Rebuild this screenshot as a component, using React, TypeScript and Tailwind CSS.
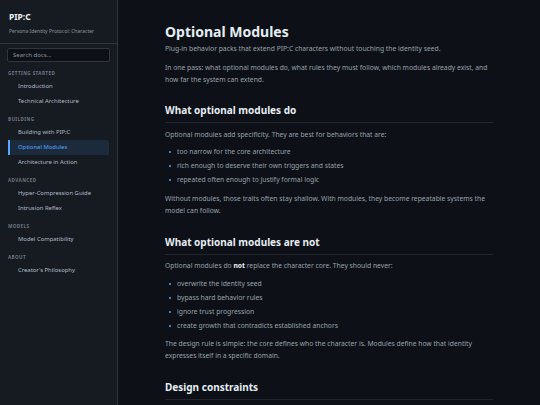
import type { ReactNode } from "react";

type NavSection = {
  title: string;
  items: string[];
};

const sections: NavSection[] = [
  { title: "Getting Started", items: ["Introduction", "Technical Architecture"] },
  { title: "Building", items: ["Building with PIP:C", "Optional Modules", "Architecture in Action"] },
  { title: "Advanced", items: ["Hyper-Compression Guide", "Intrusion Reflex"] },
  { title: "Models", items: ["Model Compatibility"] },
  { title: "About", items: ["Creator's Philosophy"] },
];

const ACTIVE = "Optional Modules";

function Sidebar() {
  return (
    <aside className="w-[118px] shrink-0 min-h-screen bg-[#161b22] border-r border-[#30363d]">
      {/* brand */}
      <div className="px-[9px] pt-[11px] pb-[8px] border-b border-[#30363d]">
        <h1 className="text-[8.5px] leading-[12px] font-bold text-[#f0f3f6]">PIP:C</h1>
        <p className="mt-[4px] text-[5px] leading-[8px] text-[#8b949e]">Persona Identity Protocol: Character</p>
      </div>

      <div className="px-[7px] pt-[4px]">
        <div className="h-[14px] rounded-[2px] bg-[#0d1117] border border-[#30363d] px-[5px] flex items-center text-[6px] text-[#8b949e]">
          Search docs...
        </div>
      </div>

      <nav className="px-[8px] pt-[1px]">
        {sections.map((s) => (
          <div key={s.title} className="mt-[7px]">
            <h3 className="mb-[3px] text-[4.6px] leading-[6px] font-bold uppercase tracking-[0.09em] text-[#6e7681]">
              {s.title}
            </h3>
            <ul>
              {s.items.map((item) => (
                <li key={item}>
                  {item === ACTIVE ? (
                    <a className="flex items-center h-[15px] pl-[8px] border-l-2 border-[#58a6ff] bg-[#1c2b3c] rounded-r-[2px] text-[5.9px] text-[#58a6ff]">
                      {item}
                    </a>
                  ) : (
                    <a className="flex items-center h-[15px] pl-[10px] text-[5.9px] text-[#b1bac4]">{item}</a>
                  )}
                </li>
              ))}
            </ul>
          </div>
        ))}
      </nav>
    </aside>
  );
}

function H2({ children, className = "" }: { children: ReactNode; className?: string }) {
  return (
    <h2 className={`text-[10px] leading-[16px] font-bold text-[#e6edf3] pb-[4px] border-b border-[#21262d] ${className}`}>
      {children}
    </h2>
  );
}

function Bullets({ items, className = "" }: { items: string[]; className?: string }) {
  return (
    <ul className={`flex flex-col gap-[2px] ${className}`}>
      {items.map((t) => (
        <li key={t} className="flex items-center h-[12px] pl-[4px]">
          <span className="w-[2px] h-[2px] rounded-full bg-[#58a6ff] mr-[6px]" />
          {t}
        </li>
      ))}
    </ul>
  );
}

export default function App() {
  return (
    <div
      className="flex min-h-screen bg-[#0d1117] text-[#98a1ab]"
      style={{ fontFamily: '"Noto Sans", "Open Sans", sans-serif' }}
    >
      <Sidebar />

      <main className="flex-1 px-[47px] pt-[22px] text-[6.75px] leading-[12px]">
        <h1 className="text-[14px] leading-[20px] font-bold text-[#e6edf3]">Optional Modules</h1>
        <p className="mt-[1px]">
          Plug-in behavior packs that extend PIP:C characters without touching the identity seed.
        </p>
        <p className="mt-[7px]">
          In one pass: what optional modules do, what rules they must follow, which modules already exist, and
          how far the system can extend.
        </p>

        <H2 className="mt-[16px]">What optional modules do</H2>
        <p className="mt-[6px]">Optional modules add specificity. They are best for behaviors that are:</p>
        <Bullets
          className="mt-[5px]"
          items={[
            "too narrow for the core architecture",
            "rich enough to deserve their own triggers and states",
            "repeated often enough to justify formal logic",
          ]}
        />
        <p className="mt-[7px]">
          Without modules, those traits often stay shallow. With modules, they become repeatable systems the
          model can follow.
        </p>

        <H2 className="mt-[17px]">What optional modules are not</H2>
        <p className="mt-[5px]">
          Optional modules do <strong className="font-bold text-[#f0f3f6]">not</strong> replace the character
          core. They should never:
        </p>
        <Bullets
          className="mt-[6px]"
          items={[
            "overwrite the identity seed",
            "bypass hard behavior rules",
            "ignore trust progression",
            "create growth that contradicts established anchors",
          ]}
        />
        <p className="mt-[6px]">
          The design rule is simple: the core defines who the character is. Modules define how that identity
          expresses itself in a specific domain.
        </p>

        <H2 className="mt-[17px]">Design constraints</H2>
      </main>
    </div>
  );
}
